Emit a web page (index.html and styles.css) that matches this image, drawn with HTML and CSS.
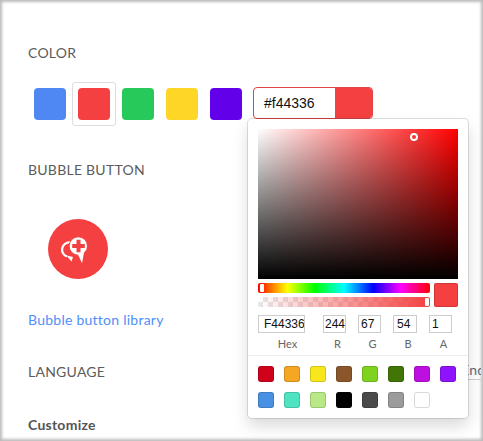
FILE: index.html
```html
<!DOCTYPE html>
<html lang="en">
<head>
  <meta charset="UTF-8">
  <title>Bubble settings</title>
  <meta name="viewport" content="width=device-width, initial-scale=1.0">
  <link rel="stylesheet" href="styles.css">
</head>
<body>
  <div class="panel">
    <h3 class="section-title">COLOR</h3>
    <div class="color-row">
      <span class="color-option"><span class="dot dot-blue"></span></span>
      <span class="color-option selected"><span class="dot dot-red"></span></span>
      <span class="color-option"><span class="dot dot-green"></span></span>
      <span class="color-option"><span class="dot dot-yellow"></span></span>
      <span class="color-option"><span class="dot dot-purple"></span></span>
      <div class="color-input">
        <span class="color-value">#f44336</span>
        <span class="color-preview"></span>
      </div>
    </div>

    <h3 class="section-title title-bubble">BUBBLE BUTTON</h3>
    <div class="bubble">
      <svg width="36" height="36" viewBox="0 0 36 36">
        <path d="M10 11.500a7.200 7.200 0 0 0-3 14" fill="none" stroke="#fff" stroke-width="2.300"/>
        <path d="M6.500 24.500L11.500 30.500l1.500-4.500z" fill="#fff"/>
        <circle cx="18.300" cy="15" r="9.200" fill="#fff" stroke="#f44040" stroke-width="1"/>
        <path d="M18 23.500l4 8.700 2-10.500z" fill="#fff"/>
        <path d="M16.500 8.700h4v4.300h4.300v4h-4.300v4.300h-4V17h-4.300v-4h4.300z" fill="#f44040"/>
      </svg>
    </div>
    <a class="library-link" href="#">Bubble button library</a>

    <h3 class="section-title title-language">LANGUAGE</h3>
    <div class="language-field">End</div>
    <div class="customize">Customize</div>

    <div class="picker">
      <div class="saturation"><span class="sat-handle"></span></div>
      <div class="sliders">
        <div class="slider-col">
          <div class="hue"><span class="slider-handle handle-hue"></span></div>
          <div class="alpha"><span class="slider-handle handle-alpha"></span></div>
        </div>
        <div class="picker-preview"></div>
      </div>
      <div class="fields">
        <label class="field field-hex"><span class="field-box">F44336</span><span class="field-label">Hex</span></label>
        <label class="field field-r"><span class="field-box">244</span><span class="field-label">R</span></label>
        <label class="field field-g"><span class="field-box">67</span><span class="field-label">G</span></label>
        <label class="field field-b"><span class="field-box">54</span><span class="field-label">B</span></label>
        <label class="field field-a"><span class="field-box">1</span><span class="field-label">A</span></label>
      </div>
      <div class="presets">
        <span class="preset" style="background:#d0021b"></span>
        <span class="preset" style="background:#f5a623"></span>
        <span class="preset" style="background:#f8e71c"></span>
        <span class="preset" style="background:#8b572a"></span>
        <span class="preset" style="background:#7ed321"></span>
        <span class="preset" style="background:#417505"></span>
        <span class="preset" style="background:#bd10e0"></span>
        <span class="preset" style="background:#9013fe"></span>
        <span class="preset" style="background:#4a90e2"></span>
        <span class="preset" style="background:#50e3c2"></span>
        <span class="preset" style="background:#b8e986"></span>
        <span class="preset" style="background:#000000"></span>
        <span class="preset" style="background:#4a4a4a"></span>
        <span class="preset" style="background:#9b9b9b"></span>
        <span class="preset" style="background:#ffffff"></span>
      </div>
    </div>
  </div>
</body>
</html>
```

FILE: styles.css
```css
* {
  box-sizing: border-box;
}

html, body {
  margin: 0;
  height: 100%;
}

body {
  background: #fff;
  color: #555;
  font-family: "Lato", "Open Sans", sans-serif;
  overflow: hidden;
}

.panel {
  position: relative;
  width: 483px;
  height: 441px;
  padding: 44px 28px 0;
  overflow: hidden;
  letter-spacing: 0.25px;
  box-shadow: inset 3px 3px 3px -1px #bbb, inset -3px -3px 3px -1px #bbb;
}

.section-title {
  margin: 0;
  font-size: 14px;
  font-weight: 400;
  line-height: 17px;
  color: #5c5c5c;
}

.color-row {
  display: flex;
  align-items: center;
  margin: 21px 0 0;
  height: 44px;
}

.color-option {
  display: flex;
  align-items: center;
  justify-content: center;
  width: 44px;
  height: 44px;
  border: 1px solid transparent;
  border-radius: 3px;
}

.color-option.selected {
  border-color: #ddd;
}

.dot {
  width: 32px;
  height: 32px;
  border-radius: 4px;
}

.dot-blue { background: #4f87f3; }
.dot-red { background: #f44040; }
.dot-green { background: #27c95b; }
.dot-yellow { background: #fed627; }
.dot-purple { background: #6200ea; }

.color-input {
  display: flex;
  width: 120px;
  height: 32px;
  margin: 0 0 2px 5px;
  border: 1px solid #e04545;
  border-radius: 4px;
  overflow: hidden;
}

.color-value {
  width: 81px;
  padding-left: 10px;
  font-family: "Liberation Sans", sans-serif;
  font-size: 14px;
  line-height: 30px;
  letter-spacing: 0;
  color: #111;
}

.color-preview {
  flex: 1;
  background: #f44040;
}

.title-bubble {
  margin-top: 35px;
}

.bubble {
  display: flex;
  align-items: center;
  justify-content: center;
  width: 60px;
  height: 60px;
  margin: 41px 0 0 20px;
  border-radius: 50%;
  background: #f44040;
}

.library-link {
  display: block;
  margin-top: 32px;
  font-size: 14px;
  line-height: 17px;
  color: #4f8ff7;
  text-decoration: none;
}

.title-language {
  margin-top: 35px;
}

.customize {
  margin-top: 36px;
  font-size: 14px;
  font-weight: 700;
  line-height: 17px;
}

.language-field {
  position: absolute;
  left: 440px;
  top: 362px;
  width: 41px;
  height: 18px;
  padding-left: 21px;
  overflow: hidden;
  font-size: 14px;
  line-height: 16px;
  color: #5b6b7b;
  border-bottom: 1px solid #ccc;
}

.picker {
  position: absolute;
  left: 248px;
  top: 119px;
  width: 220px;
  height: 299px;
  padding: 10px;
  letter-spacing: 0;
  background: #fff;
  border-radius: 4px;
  box-shadow: 0 0 0 1px rgba(0, 0, 0, 0.12), 0 8px 16px rgba(0, 0, 0, 0.15);
}

.saturation {
  position: relative;
  width: 200px;
  height: 150px;
  background: linear-gradient(to top, #000, transparent), linear-gradient(to right, #fff, #f00);
}

.sat-handle {
  position: absolute;
  left: 152px;
  top: 4px;
  width: 8px;
  height: 8px;
  border: 2px solid #fff;
  border-radius: 50%;
  box-shadow: 0 0 1px #555;
}

.sliders {
  display: flex;
  gap: 4px;
  margin-top: 4px;
}

.slider-col {
  display: flex;
  flex-direction: column;
  gap: 4px;
  width: 172px;
}

.hue, .alpha {
  position: relative;
  height: 10px;
  border-radius: 2px;
}

.hue {
  background: linear-gradient(to right, #f00 0%, #ff0 17%, #0f0 33%, #0ff 50%, #00f 67%, #f0f 83%, #f00 100%);
}

.alpha {
  background:
    linear-gradient(to right, rgba(244, 64, 64, 0), #f44040),
    repeating-conic-gradient(#e6e6e6 0% 25%, #fff 0% 50%) 0 0 / 10px 10px;
}

.slider-handle {
  position: absolute;
  top: 1px;
  width: 4px;
  height: 8px;
  background: #fff;
  border-radius: 1px;
}

.handle-hue { left: 2px; }
.handle-alpha { right: 1px; }

.picker-preview {
  width: 24px;
  height: 24px;
  background: #f44040;
  border-radius: 2px;
  box-shadow: inset 0 0 0 1px rgba(0, 0, 0, 0.15);
}

.fields {
  position: relative;
  height: 40px;
  margin-top: 8px;
}

.field {
  position: absolute;
  top: 0;
  display: flex;
  flex-direction: column;
  align-items: center;
  font-size: 11px;
  line-height: 14px;
  color: #666;
}

.field-box {
  display: block;
  width: 100%;
  height: 18px;
  margin-bottom: 4px;
  padding-left: 2px;
  overflow: hidden;
  border: 1px solid #ccc;
  font-family: "Liberation Sans", sans-serif;
  font-size: 12px;
  line-height: 16px;
  color: #111;
  white-space: nowrap;
}

.field-label {
  margin-left: 6px;
}

.field-hex .field-label {
  margin-left: 12px;
}

.field-hex .field-box {
  padding-left: 5px;
}

.field-r .field-box {
  padding-left: 1px;
}

.field-b .field-box {
  padding-left: 3px;
}

.field-hex { left: 0; width: 47px; }
.field-r { left: 65px; width: 23px; }
.field-g { left: 100px; width: 23px; }
.field-b { left: 135px; width: 24px; }
.field-a { left: 171px; width: 23px; }

.presets {
  display: grid;
  grid-template-columns: repeat(8, 16px);
  gap: 10px;
  margin: 0 -10px;
  padding: 10px 10px 0;
  border-top: 1px solid #eee;
}

.preset {
  width: 16px;
  height: 16px;
  border-radius: 3px;
  box-shadow: inset 0 0 0 1px rgba(0, 0, 0, 0.15);
}
```
